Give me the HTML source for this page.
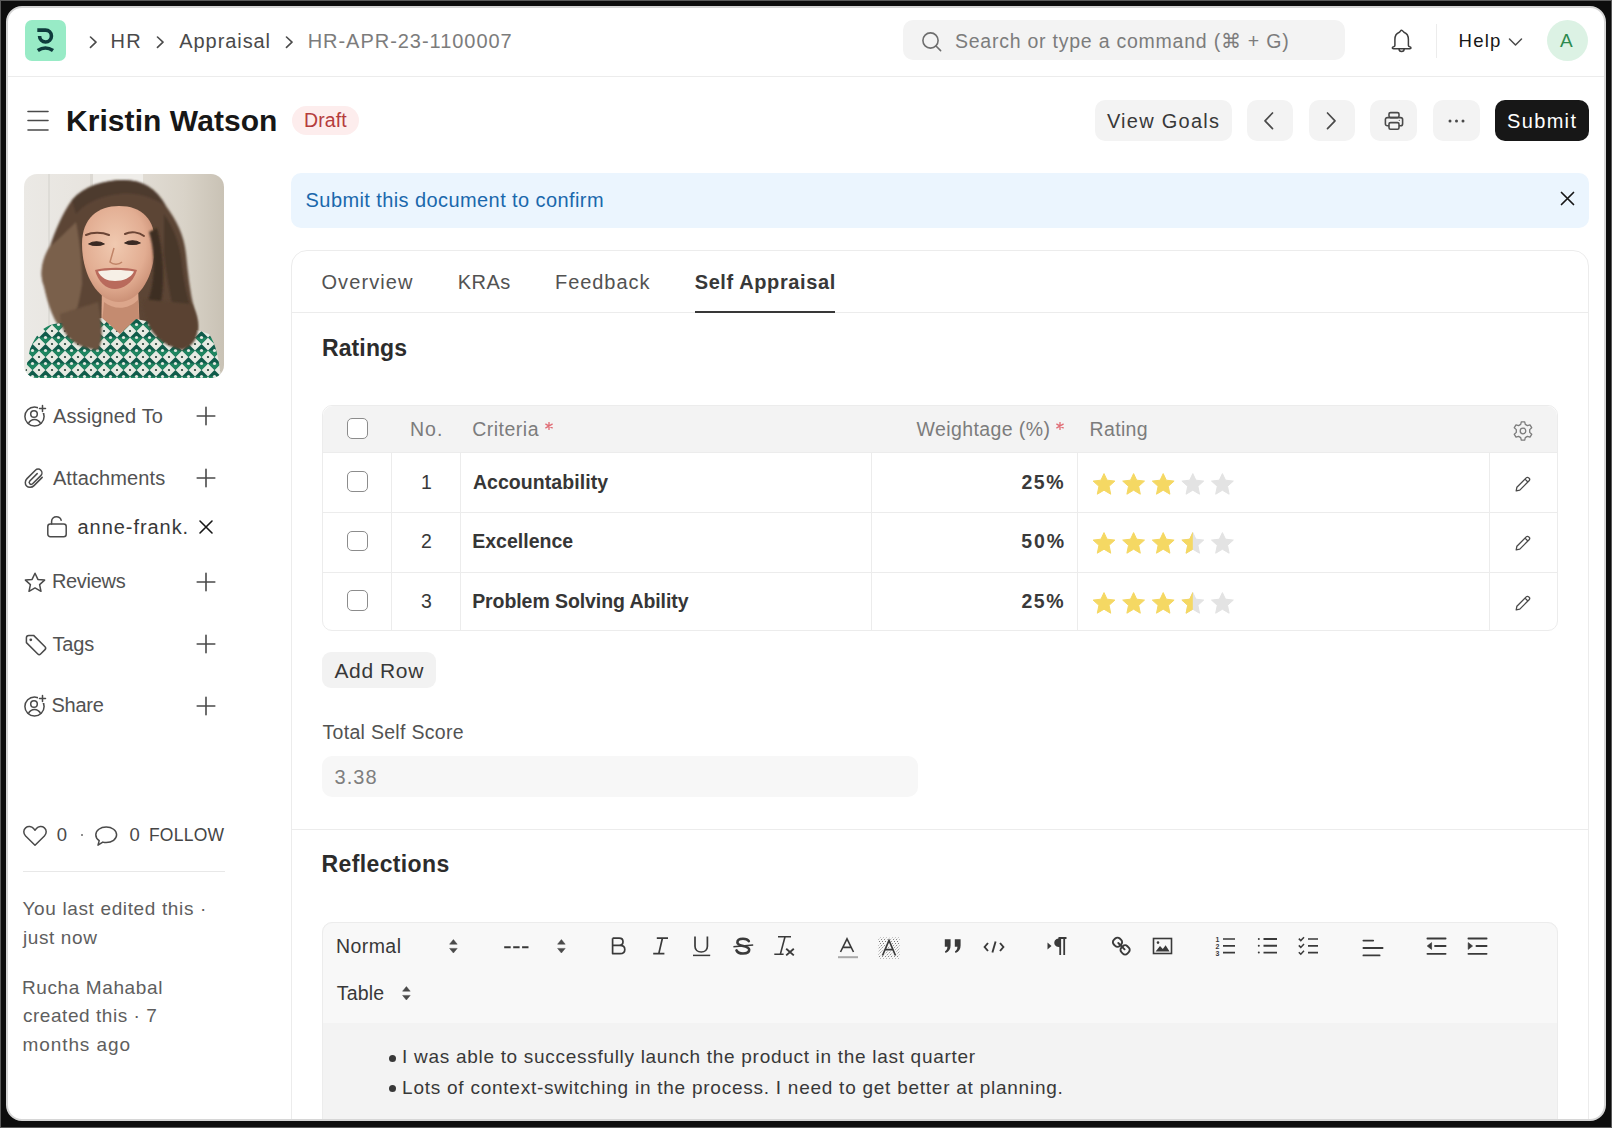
<!DOCTYPE html>
<html><head><meta charset="utf-8"><style>
html,body{margin:0;padding:0;width:1612px;height:1128px;overflow:hidden;background:#5a5a5a;}
.frame{position:absolute;left:1px;top:1px;width:1610px;height:1126px;background:#0d0d0d;border-radius:0px;}
.panel{position:absolute;left:6px;top:6px;width:1600px;height:1115px;background:#ffffff;border-radius:16px;border:2px solid #d6d6d6;box-sizing:border-box;overflow:hidden;}
.t,.r{position:absolute;}
.t{font-family:"Liberation Sans",sans-serif;line-height:1;white-space:nowrap;}
.r{box-sizing:border-box;}
</style></head><body>
<div class="frame"></div>
<div class="panel"><div style="position:absolute;left:-8px;top:-8px;width:1612px;height:1128px;">
<div class="r" style="left:25px;top:20px;width:41px;height:41px;background:#98ebc6;border-radius:7px;"></div>
<svg class="r" style="left:25px;top:20px;" width="41" height="41" viewBox="0 0 41 41" fill="none"><path d="M12.3 10.1 H20.5 A5.95 5.95 0 1 1 14.55 16.1" stroke="#0e3b3c" stroke-width="3.6"/><path d="M12.8 30.6 Q20.4 25.4 28 30.6" stroke="#0e3b3c" stroke-width="3.6"/></svg>
<svg class="r" style="left:88.5px;top:36px;" width="9" height="13" viewBox="0 0 9 13" fill="none"><path d="M1.5 1 L7 6.2 L1.5 11.4" stroke="#4b4b4b" stroke-width="1.6" stroke-linecap="round" stroke-linejoin="round"/></svg>
<svg class="r" style="left:155.5px;top:36px;" width="9" height="13" viewBox="0 0 9 13" fill="none"><path d="M1.5 1 L7 6.2 L1.5 11.4" stroke="#4b4b4b" stroke-width="1.6" stroke-linecap="round" stroke-linejoin="round"/></svg>
<svg class="r" style="left:284.5px;top:36px;" width="9" height="13" viewBox="0 0 9 13" fill="none"><path d="M1.5 1 L7 6.2 L1.5 11.4" stroke="#4b4b4b" stroke-width="1.6" stroke-linecap="round" stroke-linejoin="round"/></svg>
<div class="t" id="k0" style="left:110.50px;top:30.9px;font-size:20px;font-weight:400;color:#4a4a4a;letter-spacing:1.200px;">HR</div>
<div class="t" id="k1" style="left:179.30px;top:30.9px;font-size:20px;font-weight:400;color:#4a4a4a;letter-spacing:0.924px;">Appraisal</div>
<div class="t" id="k2" style="left:307.70px;top:30.9px;font-size:20px;font-weight:400;color:#7c7c7c;letter-spacing:0.962px;">HR-APR-23-1100007</div>
<div class="r" style="left:903px;top:20px;width:442px;height:40px;background:#f3f3f3;border-radius:10px;"></div>
<svg class="r" style="left:921px;top:31px;" width="22" height="22" viewBox="0 0 22 22" fill="none"><circle cx="9.5" cy="9.5" r="7.6" stroke="#6e6e6e" stroke-width="1.6"/><path d="M15 15 L19.6 19.6" stroke="#6e6e6e" stroke-width="1.6" stroke-linecap="round"/></svg>
<div class="t" id="k3" style="left:954.90px;top:32.0px;font-size:19.5px;font-weight:400;color:#7c7c7c;letter-spacing:0.769px;">Search or type a command (⌘ + G)</div>
<svg class="r" style="left:1390px;top:28px;" width="24" height="26" viewBox="0 0 24 26" fill="none"><path d="M11.6 2.2 C10.6 2.2 10.2 3.6 9.4 4.3 C6.5 5.3 4.9 8 4.9 11.5 V17.5 C4.9 18.2 4.4 18.6 3.6 18.8 C2.6 19 2.3 19.6 2.3 20.1 C2.3 20.6 2.8 20.7 3.5 20.7 H19.8 C20.5 20.7 21 20.6 21 20.1 C21 19.6 20.7 19 19.7 18.8 C18.9 18.6 18.4 18.2 18.4 17.5 V11.5 C18.4 8 16.8 5.3 13.9 4.3 C13.1 3.6 12.6 2.2 11.6 2.2 Z" stroke="#3e3e3e" stroke-width="1.5" stroke-linejoin="round"/><path d="M9 20.7 C9 22.4 10.2 23.5 11.6 23.5 C13 23.5 14.2 22.4 14.2 20.7" stroke="#3e3e3e" stroke-width="1.5"/></svg>
<div class="r" style="left:1435.5px;top:23.5px;width:1.2px;height:34px;background:#ececec;border-radius:0px;"></div>
<div class="t" id="k4" style="left:1458.50px;top:31.5px;font-size:18.6px;font-weight:400;color:#171717;letter-spacing:1.233px;">Help</div>
<svg class="r" style="left:1508px;top:37px;" width="15" height="10" viewBox="0 0 15 10" fill="none"><path d="M1.5 2 L7.5 8 L13.5 2" stroke="#4a4a4a" stroke-width="1.5" stroke-linecap="round" stroke-linejoin="round"/></svg>
<div class="r" style="left:1547px;top:20px;width:41px;height:41px;background:#dcf2e4;border-radius:21px;"></div>
<div class="t" id="k5" style="left:1560.00px;top:31.4px;font-size:19px;font-weight:400;color:#2c8a4f;letter-spacing:0.000px;">A</div>
<div class="r" style="left:8px;top:75.5px;width:1597px;height:1px;background:#ececec;border-radius:0px;"></div>
<svg class="r" style="left:26px;top:109px;" width="24" height="24" viewBox="0 0 24 24" fill="none"><path d="M2 2.5 H22 M2 11.5 H22 M2 21 H22" stroke="#4a4a4a" stroke-width="1.6" stroke-linecap="round"/></svg>
<div class="t" id="k6" style="left:65.90px;top:106.3px;font-size:30px;font-weight:700;color:#171717;letter-spacing:0.077px;">Kristin Watson</div>
<div class="r" style="left:292px;top:106px;width:67px;height:29px;background:#fdeded;border-radius:15px;"></div>
<div class="t" id="k7" style="left:304.00px;top:110.6px;font-size:19.5px;font-weight:400;color:#b53c3c;letter-spacing:0.100px;">Draft</div>
<div class="r" style="left:1095px;top:100px;width:137px;height:41px;background:#f3f3f3;border-radius:10px;"></div>
<div class="t" id="k8" style="left:1106.90px;top:111.2px;font-size:20px;font-weight:400;color:#383838;letter-spacing:1.255px;">View Goals</div>
<div class="r" style="left:1247px;top:100px;width:46px;height:41px;background:#f3f3f3;border-radius:10px;"></div>
<svg class="r" style="left:1262px;top:111px;" width="14" height="20" viewBox="0 0 14 20" fill="none"><path d="M10.5 2 L3 9.8 L10.5 17.6" stroke="#4a4a4a" stroke-width="1.7" stroke-linecap="round" stroke-linejoin="round"/></svg>
<div class="r" style="left:1309px;top:100px;width:46px;height:41px;background:#f3f3f3;border-radius:10px;"></div>
<svg class="r" style="left:1324px;top:111px;" width="14" height="20" viewBox="0 0 14 20" fill="none"><path d="M3.5 2 L11 9.8 L3.5 17.6" stroke="#4a4a4a" stroke-width="1.7" stroke-linecap="round" stroke-linejoin="round"/></svg>
<div class="r" style="left:1370px;top:100px;width:47px;height:41px;background:#f3f3f3;border-radius:10px;"></div>
<svg class="r" style="left:1383px;top:110px;" width="22" height="22" viewBox="0 0 22 22" fill="none"><rect x="6" y="2.6" width="10" height="5" rx="1.5" stroke="#4a4a4a" stroke-width="1.6"/><path d="M6 15.8 H4.5 C3.2 15.8 2.4 15 2.4 13.7 V9.6 C2.4 8.3 3.2 7.6 4.5 7.6 H17.5 C18.8 7.6 19.6 8.3 19.6 9.6 V13.7 C19.6 15 18.8 15.8 17.5 15.8 H16" stroke="#4a4a4a" stroke-width="1.6"/><rect x="6" y="12.6" width="10" height="6.6" rx="1.5" stroke="#4a4a4a" stroke-width="1.6"/><circle cx="16.3" cy="10.3" r="0.6" fill="#4a4a4a"/></svg>
<div class="r" style="left:1433px;top:100px;width:47px;height:41px;background:#f3f3f3;border-radius:10px;"></div>
<svg class="r" style="left:1446px;top:116px;" width="22" height="10" viewBox="0 0 22 10" fill="none"><circle cx="4" cy="5" r="1.5" fill="#4a4a4a"/><circle cx="10.5" cy="5" r="1.5" fill="#4a4a4a"/><circle cx="17" cy="5" r="1.5" fill="#4a4a4a"/></svg>
<div class="r" style="left:1494.5px;top:100px;width:94.5px;height:41px;background:#171717;border-radius:10px;"></div>
<div class="t" id="k9" style="left:1507.10px;top:111.4px;font-size:20px;font-weight:400;color:#ffffff;letter-spacing:1.320px;">Submit</div>
<svg class="r" style="left:24px;top:174px;" width="200" height="204" viewBox="0 0 200 204" fill="none">
<defs>
<linearGradient id="bgp" x1="0" y1="0" x2="1" y2="0">
<stop offset="0" stop-color="#ebe9e5"/><stop offset="0.45" stop-color="#e6e2dc"/><stop offset="0.8" stop-color="#d9d3c8"/><stop offset="1" stop-color="#c9c2b5"/></linearGradient>
<radialGradient id="face" cx="0.45" cy="0.4" r="0.65"><stop offset="0" stop-color="#f0c9b0"/><stop offset="0.65" stop-color="#e2ad92"/><stop offset="1" stop-color="#c68a70"/></radialGradient>
<pattern id="shirt" x="2" y="1" width="13" height="13" patternUnits="userSpaceOnUse">
<rect width="13" height="13" fill="#e6eae2"/>
<path d="M6.5 0 L13 6.5 L6.5 13 L0 6.5 Z" fill="#0f5c4a"/>
<path d="M0 6.5 L6.5 13 L13 6.5 Z" fill="#1f8560"/>
<circle cx="6.5" cy="6.5" r="1.6" fill="#e6eae2"/>
<circle cx="0" cy="0" r="1.1" fill="#1c3a30"/><circle cx="13" cy="0" r="1.1" fill="#1c3a30"/><circle cx="0" cy="13" r="1.1" fill="#1c3a30"/><circle cx="13" cy="13" r="1.1" fill="#1c3a30"/>
</pattern>
<clipPath id="pc"><rect width="200" height="204" rx="13"/></clipPath>
<filter id="hb" x="-20%" y="-20%" width="140%" height="140%"><feGaussianBlur stdDeviation="1.0"/></filter>
<filter id="sb" x="-10%" y="-10%" width="120%" height="120%"><feGaussianBlur stdDeviation="0.5"/></filter>
</defs>
<g clip-path="url(#pc)">
<rect width="200" height="204" fill="url(#bgp)"/>
<rect x="24" y="0" width="2" height="160" fill="#dedcd7"/>
<rect x="66" y="0" width="3" height="40" fill="#dcd9d3"/>
<rect x="69" y="0" width="50" height="30" fill="#efede9"/>
<g filter="url(#hb)"><path d="M100 6 C118 6 132 14 142 32 C152 46 160 60 162 80 C164 100 166 118 170 135 C176 150 176 165 160 174 L125 174 L75 174 C60 176 45 172 42 160 C30 150 24 130 20 112 C15 100 18 85 26 72 C32 55 38 40 48 26 C60 12 80 6 100 6 Z" fill="#5c4535"/>
<path d="M20 112 C24 130 30 150 42 160 C50 150 55 130 58 110 C58 90 56 70 52 48 C40 60 30 70 26 72 C18 85 15 100 20 112 Z" fill="#7a604c"/>
<path d="M48 26 C60 12 80 6 100 6 C118 6 132 14 142 32 C128 22 110 18 95 20 C75 22 60 30 52 40 Z" fill="#4d3a2d"/>
<path d="M140 40 C150 55 156 70 158 90 C160 110 164 125 168 138 L150 140 C146 120 142 100 140 80 Z" fill="#4a372b"/>
</g>
<path d="M78 112 L77 162 L116 162 L114 112 Z" fill="#dca68b"/>
<path d="M80 128 C90 136 104 136 114 126 L116 162 L77 162 Z" fill="#c48b70"/>
<path d="M58 70 C58 44 74 32 95 32 C118 32 131 45 131 70 C131 101 116 128 95 128 C74 128 58 101 58 70 Z" fill="url(#face)"/>
<g filter="url(#hb)"><path d="M125 58 C132 80 131 110 123 130 L136 134 C141 110 140 80 133 54 Z" fill="#3d2d23"/>
</g>
<path d="M0 204 L6 175 C12 160 20 152 30 150 C50 147 65 145 78 144 L96 160 L112 145 C135 150 165 152 185 160 C192 170 195 185 197 204 Z" fill="url(#shirt)"/>
<g filter="url(#hb)"><path d="M36 140 C36 158 48 174 74 176 C80 165 78 150 74 128 Z" fill="#6c5240"/>
<path d="M118 125 C120 150 130 170 158 176 C176 170 178 150 168 130 Z" fill="#5a4333"/>
</g>
<path d="M62 61 C68 58 78 58 85 61" stroke="#6b4535" stroke-width="2" stroke-linecap="round" fill="none"/>
<path d="M101 60 C107 57 115 58 120 62" stroke="#6b4535" stroke-width="2" stroke-linecap="round" fill="none"/>
<path d="M65 70 C69 67 76 67 80 70 C76 72 69 72 65 70 Z" fill="#3a2a24" stroke="#3a2a24" stroke-width="1.2"/>
<path d="M101 69 C105 66 112 66 116 69 C112 71 105 71 101 69 Z" fill="#3a2a24" stroke="#3a2a24" stroke-width="1.2"/>
<path d="M90 74 L86 88 C89 91 95 91 98 88" stroke="#c08468" stroke-width="1.5" fill="none"/>
<path d="M71 96 C82 93 102 93 113 96 C109 110 98 115 91 115 C82 115 74 108 71 96 Z" fill="#b96a5c"/>
<path d="M74 97.5 C84 95.5 100 95.5 110 97.5 C107 104 99 107 91 107 C83 107 77 104 74 97.5 Z" fill="#f6f0e6"/>
</g></svg>
<svg class="r" style="left:23px;top:404px;" width="24" height="24" viewBox="0 0 24 24" fill="none"><circle cx="11.5" cy="12.5" r="9.6" stroke="#4a4a4a" stroke-width="1.5"/><circle cx="11" cy="10" r="3.3" stroke="#4a4a4a" stroke-width="1.5"/><path d="M5.2 19.8 C6.8 16.8 9 15.6 11.5 15.6 C14 15.6 16.2 16.8 17.8 19.8" stroke="#4a4a4a" stroke-width="1.5"/><rect x="15" y="0" width="9" height="9" fill="#fff"/><path d="M19.5 1.5 V7.5 M16.5 4.5 H22.5" stroke="#4a4a4a" stroke-width="1.5" stroke-linecap="round"/></svg>
<div class="t" id="k10" style="left:52.90px;top:406.2px;font-size:20px;font-weight:400;color:#525252;letter-spacing:0.150px;">Assigned To</div>
<svg class="r" style="left:196px;top:406px;" width="20" height="20" viewBox="0 0 20 20" fill="none"><path d="M10 1.2 V18.8 M1.2 10 H18.8" stroke="#4a4a4a" stroke-width="1.6" stroke-linecap="round"/></svg>
<svg class="r" style="left:23px;top:467px;" width="24" height="24" viewBox="0 0 24 24" fill="none"><path d="M19.2 10.4 L11 18.6 C8.8 20.8 5.4 20.8 3.6 19 C1.8 17.2 1.8 13.8 4 11.6 L12.4 3.2 C13.9 1.7 16.3 1.7 17.8 3.2 C19.3 4.7 19.3 7.1 17.8 8.6 L9.6 16.8 C8.8 17.6 7.5 17.6 6.8 16.8 C6.1 16.1 6.1 14.8 6.8 14 L14.2 6.6" stroke="#4a4a4a" stroke-width="1.5" stroke-linecap="round"/></svg>
<div class="t" id="k11" style="left:52.90px;top:468.1px;font-size:20px;font-weight:400;color:#525252;letter-spacing:0.110px;">Attachments</div>
<svg class="r" style="left:196px;top:468px;" width="20" height="20" viewBox="0 0 20 20" fill="none"><path d="M10 1.2 V18.8 M1.2 10 H18.8" stroke="#4a4a4a" stroke-width="1.6" stroke-linecap="round"/></svg>
<svg class="r" style="left:46px;top:515px;" width="22" height="24" viewBox="0 0 22 24" fill="none"><rect x="1.8" y="9" width="18.4" height="12.8" rx="2.5" stroke="#4a4a4a" stroke-width="1.5"/><path d="M5.6 9 V6.4 C5.6 3.6 7.8 1.8 10.4 1.8 C12.8 1.8 14.6 3.2 15.2 5.2" stroke="#4a4a4a" stroke-width="1.5" stroke-linecap="round"/></svg>
<div class="t" id="k12" style="left:77.50px;top:516.5px;font-size:20px;font-weight:400;color:#383838;letter-spacing:0.950px;">anne-frank.</div>
<svg class="r" style="left:198px;top:519px;" width="16" height="16" viewBox="0 0 16 16" fill="none"><path d="M2 2 L14 14 M14 2 L2 14" stroke="#171717" stroke-width="1.6" stroke-linecap="round"/></svg>
<svg class="r" style="left:23px;top:571px;" width="24" height="24" viewBox="0 0 24 24" fill="none"><path d="M12 2.2 L14.9 8.4 L21.6 9.1 L16.6 13.6 L18 20.3 L12 16.9 L6 20.3 L7.4 13.6 L2.4 9.1 L9.1 8.4 Z" stroke="#4a4a4a" stroke-width="1.5" stroke-linejoin="round"/></svg>
<div class="t" id="k13" style="left:51.90px;top:570.9px;font-size:20px;font-weight:400;color:#525252;letter-spacing:-0.300px;">Reviews</div>
<svg class="r" style="left:196px;top:572px;" width="20" height="20" viewBox="0 0 20 20" fill="none"><path d="M10 1.2 V18.8 M1.2 10 H18.8" stroke="#4a4a4a" stroke-width="1.6" stroke-linecap="round"/></svg>
<svg class="r" style="left:24px;top:633px;" width="24" height="24" viewBox="0 0 24 24" fill="none"><path d="M2.4 4.8 V9.6 L13.8 21 C14.6 21.8 15.8 21.8 16.6 21 L21 16.6 C21.8 15.8 21.8 14.6 21 13.8 L9.6 2.4 H4.8 C3.5 2.4 2.4 3.5 2.4 4.8 Z" stroke="#4a4a4a" stroke-width="1.5" stroke-linejoin="round"/><circle cx="6.8" cy="6.8" r="1.4" fill="#4a4a4a"/></svg>
<div class="t" id="k14" style="left:52.50px;top:634.1px;font-size:20px;font-weight:400;color:#525252;letter-spacing:-0.134px;">Tags</div>
<svg class="r" style="left:196px;top:634px;" width="20" height="20" viewBox="0 0 20 20" fill="none"><path d="M10 1.2 V18.8 M1.2 10 H18.8" stroke="#4a4a4a" stroke-width="1.6" stroke-linecap="round"/></svg>
<svg class="r" style="left:23px;top:694px;" width="24" height="24" viewBox="0 0 24 24" fill="none"><circle cx="11.5" cy="12.5" r="9.6" stroke="#4a4a4a" stroke-width="1.5"/><circle cx="11" cy="10" r="3.3" stroke="#4a4a4a" stroke-width="1.5"/><path d="M5.2 19.8 C6.8 16.8 9 15.6 11.5 15.6 C14 15.6 16.2 16.8 17.8 19.8" stroke="#4a4a4a" stroke-width="1.5"/><rect x="15" y="0" width="9" height="9" fill="#fff"/><path d="M19.5 1.5 V7.5 M16.5 4.5 H22.5" stroke="#4a4a4a" stroke-width="1.5" stroke-linecap="round"/></svg>
<div class="t" id="k15" style="left:51.50px;top:695.1px;font-size:20px;font-weight:400;color:#525252;letter-spacing:-0.250px;">Share</div>
<svg class="r" style="left:196px;top:696px;" width="20" height="20" viewBox="0 0 20 20" fill="none"><path d="M10 1.2 V18.8 M1.2 10 H18.8" stroke="#4a4a4a" stroke-width="1.6" stroke-linecap="round"/></svg>
<svg class="r" style="left:22px;top:825px;" width="26" height="22" viewBox="0 0 26 22" fill="none"><path d="M13 20.2 L3.6 11 C1.2 8.6 1.2 4.8 3.6 2.8 C6 0.8 9.6 1.2 11.6 3.6 L13 5.2 L14.4 3.6 C16.4 1.2 20 0.8 22.4 2.8 C24.8 4.8 24.8 8.6 22.4 11 Z" stroke="#4a4a4a" stroke-width="1.5" stroke-linejoin="round"/></svg>
<div class="t" id="k16" style="left:56.80px;top:826.1px;font-size:18.5px;font-weight:400;color:#4a4a4a;letter-spacing:0.000px;">0</div>
<div class="r" style="left:80.5px;top:833.5px;width:2.2px;height:2.2px;background:#6a6a6a;border-radius:2px;"></div>
<svg class="r" style="left:94px;top:825px;" width="26" height="22" viewBox="0 0 26 22" fill="none"><path d="M12.2 2 C18 2 22.6 5.4 22.6 9.8 C22.6 14.2 18 17.6 12.2 17.6 C11 17.6 9.8 17.4 8.8 17.1 L4 20.2 L5.2 15.6 C3 14.2 1.8 12.2 1.8 9.8 C1.8 5.4 6.4 2 12.2 2 Z" stroke="#4a4a4a" stroke-width="1.5" stroke-linejoin="round"/></svg>
<div class="t" id="k17" style="left:129.40px;top:826.1px;font-size:18.5px;font-weight:400;color:#4a4a4a;letter-spacing:0.000px;">0</div>
<div class="t" id="k18" style="left:148.90px;top:827.4px;font-size:17.5px;font-weight:400;color:#454545;letter-spacing:0.270px;">FOLLOW</div>
<div class="r" style="left:23px;top:871px;width:202px;height:1px;background:#e8e8e8;border-radius:0px;"></div>
<div class="t" id="k19" style="left:22.50px;top:899.2px;font-size:19px;font-weight:400;color:#5e5e5e;letter-spacing:0.638px;">You last edited this ·</div>
<div class="t" id="k20" style="left:22.90px;top:927.5px;font-size:19px;font-weight:400;color:#5e5e5e;letter-spacing:0.614px;">just now</div>
<div class="t" id="k21" style="left:21.90px;top:978.1px;font-size:19px;font-weight:400;color:#5e5e5e;letter-spacing:0.617px;">Rucha Mahabal</div>
<div class="t" id="k22" style="left:22.90px;top:1006.4px;font-size:19px;font-weight:400;color:#5e5e5e;letter-spacing:0.553px;">created this · 7</div>
<div class="t" id="k23" style="left:22.50px;top:1034.7px;font-size:19px;font-weight:400;color:#5e5e5e;letter-spacing:0.911px;">months ago</div>
<div class="r" style="left:291px;top:173px;width:1298px;height:54.5px;background:#ebf5fe;border-radius:10px;"></div>
<div class="t" id="k24" style="left:305.60px;top:189.7px;font-size:20px;font-weight:400;color:#1a68ac;letter-spacing:0.410px;">Submit this document to confirm</div>
<svg class="r" style="left:1559px;top:190px;" width="17" height="17" viewBox="0 0 17 17" fill="none"><path d="M2.5 2.5 L14.5 14.5 M14.5 2.5 L2.5 14.5" stroke="#171717" stroke-width="1.7" stroke-linecap="round"/></svg>
<div class="r" style="left:291px;top:250px;width:1298px;height:1000px;background:transparent;border-radius:16px;border:1.2px solid #ececec;box-sizing:border-box;"></div>
<div class="t" id="k25" style="left:321.40px;top:272.1px;font-size:20px;font-weight:400;color:#525252;letter-spacing:1.114px;">Overview</div>
<div class="t" id="k26" style="left:457.70px;top:272.1px;font-size:20px;font-weight:400;color:#525252;letter-spacing:0.466px;">KRAs</div>
<div class="t" id="k27" style="left:555.00px;top:272.1px;font-size:20px;font-weight:400;color:#525252;letter-spacing:0.943px;">Feedback</div>
<div class="t" id="k28" style="left:694.70px;top:271.9px;font-size:20px;font-weight:700;color:#383838;letter-spacing:0.611px;">Self Appraisal</div>
<div class="r" style="left:292px;top:311.5px;width:1296px;height:1px;background:#ececec;border-radius:0px;"></div>
<div class="r" style="left:695px;top:310.6px;width:140px;height:2.2px;background:#383838;border-radius:0px;"></div>
<div class="t" id="k29" style="left:321.90px;top:337.2px;font-size:23px;font-weight:700;color:#2c2c2c;letter-spacing:0.134px;">Ratings</div>
<div class="r" style="left:322px;top:405px;width:1236px;height:226px;background:#ffffff;border-radius:10px;border:1.2px solid #ececec;box-sizing:border-box;overflow:hidden;"></div>
<div class="r" style="left:323px;top:406px;width:1234px;height:46.5px;background:#f3f3f3;border-radius:0px;border-radius:10px 10px 0 0;"></div>
<div class="r" style="left:323px;top:452px;width:1234px;height:1px;background:#ececec;border-radius:0px;"></div>
<div class="r" style="left:323px;top:512px;width:1234px;height:1px;background:#ececec;border-radius:0px;"></div>
<div class="r" style="left:323px;top:571.5px;width:1234px;height:1px;background:#ececec;border-radius:0px;"></div>
<div class="r" style="left:391px;top:453px;width:1px;height:177px;background:#ececec;border-radius:0px;"></div>
<div class="r" style="left:460px;top:453px;width:1px;height:177px;background:#ececec;border-radius:0px;"></div>
<div class="r" style="left:871px;top:453px;width:1px;height:177px;background:#ececec;border-radius:0px;"></div>
<div class="r" style="left:1077px;top:453px;width:1px;height:177px;background:#ececec;border-radius:0px;"></div>
<div class="r" style="left:1488.5px;top:453px;width:1px;height:177px;background:#ececec;border-radius:0px;"></div>
<div class="r" style="left:347px;top:418.3px;width:20.5px;height:20.5px;background:#ffffff;border-radius:5px;border:1.3px solid #8c8c8c;"></div>
<div class="t" id="k30" style="left:409.90px;top:420.3px;font-size:19.5px;font-weight:400;color:#7c7c7c;letter-spacing:1.100px;">No.</div>
<div class="t" id="k31" style="left:472.20px;top:420.3px;font-size:19.5px;font-weight:400;color:#7c7c7c;letter-spacing:0.500px;">Criteria</div>
<svg class="r" style="left:545.4px;top:421.8px;" width="8" height="8" viewBox="0 0 8 8" fill="none"><path d="M4 0.3 V7.7 M0.8 2.15 L7.2 5.85 M0.8 5.85 L7.2 2.15" stroke="#e06c75" stroke-width="1.3" stroke-linecap="round"/></svg>
<div class="t" id="k32" style="left:916.50px;top:420.3px;font-size:19.5px;font-weight:400;color:#7c7c7c;letter-spacing:0.400px;">Weightage (%)</div>
<svg class="r" style="left:1056px;top:421.8px;" width="8" height="8" viewBox="0 0 8 8" fill="none"><path d="M4 0.3 V7.7 M0.8 2.15 L7.2 5.85 M0.8 5.85 L7.2 2.15" stroke="#e06c75" stroke-width="1.3" stroke-linecap="round"/></svg>
<div class="t" id="k33" style="left:1089.60px;top:420.3px;font-size:19.5px;font-weight:400;color:#7c7c7c;letter-spacing:0.320px;">Rating</div>
<svg class="r" style="left:1512px;top:420px;" width="22" height="22" viewBox="0 0 22 22" fill="none"><path d="M9.3 1.8 H12.7 L13.3 4.4 L15.4 5.6 L18 4.8 L19.7 7.7 L17.7 9.6 V12.4 L19.7 14.3 L18 17.2 L15.4 16.4 L13.3 17.6 L12.7 20.2 H9.3 L8.7 17.6 L6.6 16.4 L4 17.2 L2.3 14.3 L4.3 12.4 V9.6 L2.3 7.7 L4 4.8 L6.6 5.6 L8.7 4.4 Z" stroke="#7c7c7c" stroke-width="1.3" stroke-linejoin="round"/><circle cx="11" cy="11" r="2.8" stroke="#7c7c7c" stroke-width="1.3"/></svg>
<div class="r" style="left:347px;top:471.4px;width:20.5px;height:20.5px;background:#ffffff;border-radius:5px;border:1.3px solid #8c8c8c;"></div>
<div class="t" id="k34" style="left:421.00px;top:472.8px;font-size:19.5px;font-weight:400;color:#383838;letter-spacing:0.000px;">1</div>
<div class="t" id="k35" style="left:472.90px;top:472.8px;font-size:19.5px;font-weight:700;color:#363636;letter-spacing:0.069px;">Accountability</div>
<div class="t" id="k36" style="left:1021.50px;top:472.8px;font-size:19.5px;font-weight:700;color:#3a3a3a;letter-spacing:1.500px;">25%</div>
<svg class="r" style="left:1092px;top:472.9px;" width="150" height="23" viewBox="0 0 150 23" fill="none"><defs><clipPath id="hc472"><rect x="0" y="0" width="12" height="24"/></clipPath></defs><path transform="translate(0.0,0)" d="M12 0.6 L15.1 7.2 L22.9 8.1 L17.1 13.3 L18.7 21.2 L12 17.2 L5.3 21.2 L6.9 13.3 L1.1 8.1 L8.9 7.2 Z" fill="#f5d863" stroke="#f5d863" stroke-width="1" stroke-linejoin="round"/><path transform="translate(29.6,0)" d="M12 0.6 L15.1 7.2 L22.9 8.1 L17.1 13.3 L18.7 21.2 L12 17.2 L5.3 21.2 L6.9 13.3 L1.1 8.1 L8.9 7.2 Z" fill="#f5d863" stroke="#f5d863" stroke-width="1" stroke-linejoin="round"/><path transform="translate(59.2,0)" d="M12 0.6 L15.1 7.2 L22.9 8.1 L17.1 13.3 L18.7 21.2 L12 17.2 L5.3 21.2 L6.9 13.3 L1.1 8.1 L8.9 7.2 Z" fill="#f5d863" stroke="#f5d863" stroke-width="1" stroke-linejoin="round"/><path transform="translate(88.80000000000001,0)" d="M12 0.6 L15.1 7.2 L22.9 8.1 L17.1 13.3 L18.7 21.2 L12 17.2 L5.3 21.2 L6.9 13.3 L1.1 8.1 L8.9 7.2 Z" fill="#e3e3e3" stroke="#e3e3e3" stroke-width="1" stroke-linejoin="round"/><path transform="translate(118.4,0)" d="M12 0.6 L15.1 7.2 L22.9 8.1 L17.1 13.3 L18.7 21.2 L12 17.2 L5.3 21.2 L6.9 13.3 L1.1 8.1 L8.9 7.2 Z" fill="#e3e3e3" stroke="#e3e3e3" stroke-width="1" stroke-linejoin="round"/></svg>
<svg class="r" style="left:1515px;top:475.5px;" width="16" height="16" viewBox="0 0 16 16" fill="none"><path d="M1.2 14.8 L1.9 11.2 L11.2 1.9 C11.9 1.2 13 1.2 13.7 1.9 L14.1 2.3 C14.8 3 14.8 4.1 14.1 4.8 L4.8 14.1 Z M10 3.1 L12.9 6" stroke="#4a4a4a" stroke-width="1.3" stroke-linejoin="round"/></svg>
<div class="r" style="left:347px;top:530.9px;width:20.5px;height:20.5px;background:#ffffff;border-radius:5px;border:1.3px solid #8c8c8c;"></div>
<div class="t" id="k37" style="left:421.00px;top:532.3px;font-size:19.5px;font-weight:400;color:#383838;letter-spacing:0.000px;">2</div>
<div class="t" id="k38" style="left:472.20px;top:532.3px;font-size:19.5px;font-weight:700;color:#363636;letter-spacing:0.011px;">Excellence</div>
<div class="t" id="k39" style="left:1021.30px;top:532.3px;font-size:19.5px;font-weight:700;color:#3a3a3a;letter-spacing:1.850px;">50%</div>
<svg class="r" style="left:1092px;top:532.4px;" width="150" height="23" viewBox="0 0 150 23" fill="none"><defs><clipPath id="hc532"><rect x="0" y="0" width="12" height="24"/></clipPath></defs><path transform="translate(0.0,0)" d="M12 0.6 L15.1 7.2 L22.9 8.1 L17.1 13.3 L18.7 21.2 L12 17.2 L5.3 21.2 L6.9 13.3 L1.1 8.1 L8.9 7.2 Z" fill="#f5d863" stroke="#f5d863" stroke-width="1" stroke-linejoin="round"/><path transform="translate(29.6,0)" d="M12 0.6 L15.1 7.2 L22.9 8.1 L17.1 13.3 L18.7 21.2 L12 17.2 L5.3 21.2 L6.9 13.3 L1.1 8.1 L8.9 7.2 Z" fill="#f5d863" stroke="#f5d863" stroke-width="1" stroke-linejoin="round"/><path transform="translate(59.2,0)" d="M12 0.6 L15.1 7.2 L22.9 8.1 L17.1 13.3 L18.7 21.2 L12 17.2 L5.3 21.2 L6.9 13.3 L1.1 8.1 L8.9 7.2 Z" fill="#f5d863" stroke="#f5d863" stroke-width="1" stroke-linejoin="round"/><path transform="translate(88.80000000000001,0)" d="M12 0.6 L15.1 7.2 L22.9 8.1 L17.1 13.3 L18.7 21.2 L12 17.2 L5.3 21.2 L6.9 13.3 L1.1 8.1 L8.9 7.2 Z" fill="#e3e3e3" stroke="#e3e3e3" stroke-width="1" stroke-linejoin="round"/><g clip-path="url(#hc532)" transform="translate(88.80000000000001,0)"><path transform="translate(0,0)" d="M12 0.6 L15.1 7.2 L22.9 8.1 L17.1 13.3 L18.7 21.2 L12 17.2 L5.3 21.2 L6.9 13.3 L1.1 8.1 L8.9 7.2 Z" fill="#f5d863" stroke="#f5d863" stroke-width="1" stroke-linejoin="round"/></g><path transform="translate(118.4,0)" d="M12 0.6 L15.1 7.2 L22.9 8.1 L17.1 13.3 L18.7 21.2 L12 17.2 L5.3 21.2 L6.9 13.3 L1.1 8.1 L8.9 7.2 Z" fill="#e3e3e3" stroke="#e3e3e3" stroke-width="1" stroke-linejoin="round"/></svg>
<svg class="r" style="left:1515px;top:535px;" width="16" height="16" viewBox="0 0 16 16" fill="none"><path d="M1.2 14.8 L1.9 11.2 L11.2 1.9 C11.9 1.2 13 1.2 13.7 1.9 L14.1 2.3 C14.8 3 14.8 4.1 14.1 4.8 L4.8 14.1 Z M10 3.1 L12.9 6" stroke="#4a4a4a" stroke-width="1.3" stroke-linejoin="round"/></svg>
<div class="r" style="left:347px;top:590.4px;width:20.5px;height:20.5px;background:#ffffff;border-radius:5px;border:1.3px solid #8c8c8c;"></div>
<div class="t" id="k40" style="left:421.00px;top:591.8px;font-size:19.5px;font-weight:400;color:#383838;letter-spacing:0.000px;">3</div>
<div class="t" id="k41" style="left:472.20px;top:591.8px;font-size:19.5px;font-weight:700;color:#363636;letter-spacing:-0.081px;">Problem Solving Ability</div>
<div class="t" id="k42" style="left:1021.50px;top:591.8px;font-size:19.5px;font-weight:700;color:#3a3a3a;letter-spacing:1.500px;">25%</div>
<svg class="r" style="left:1092px;top:591.9px;" width="150" height="23" viewBox="0 0 150 23" fill="none"><defs><clipPath id="hc591"><rect x="0" y="0" width="12" height="24"/></clipPath></defs><path transform="translate(0.0,0)" d="M12 0.6 L15.1 7.2 L22.9 8.1 L17.1 13.3 L18.7 21.2 L12 17.2 L5.3 21.2 L6.9 13.3 L1.1 8.1 L8.9 7.2 Z" fill="#f5d863" stroke="#f5d863" stroke-width="1" stroke-linejoin="round"/><path transform="translate(29.6,0)" d="M12 0.6 L15.1 7.2 L22.9 8.1 L17.1 13.3 L18.7 21.2 L12 17.2 L5.3 21.2 L6.9 13.3 L1.1 8.1 L8.9 7.2 Z" fill="#f5d863" stroke="#f5d863" stroke-width="1" stroke-linejoin="round"/><path transform="translate(59.2,0)" d="M12 0.6 L15.1 7.2 L22.9 8.1 L17.1 13.3 L18.7 21.2 L12 17.2 L5.3 21.2 L6.9 13.3 L1.1 8.1 L8.9 7.2 Z" fill="#f5d863" stroke="#f5d863" stroke-width="1" stroke-linejoin="round"/><path transform="translate(88.80000000000001,0)" d="M12 0.6 L15.1 7.2 L22.9 8.1 L17.1 13.3 L18.7 21.2 L12 17.2 L5.3 21.2 L6.9 13.3 L1.1 8.1 L8.9 7.2 Z" fill="#e3e3e3" stroke="#e3e3e3" stroke-width="1" stroke-linejoin="round"/><g clip-path="url(#hc591)" transform="translate(88.80000000000001,0)"><path transform="translate(0,0)" d="M12 0.6 L15.1 7.2 L22.9 8.1 L17.1 13.3 L18.7 21.2 L12 17.2 L5.3 21.2 L6.9 13.3 L1.1 8.1 L8.9 7.2 Z" fill="#f5d863" stroke="#f5d863" stroke-width="1" stroke-linejoin="round"/></g><path transform="translate(118.4,0)" d="M12 0.6 L15.1 7.2 L22.9 8.1 L17.1 13.3 L18.7 21.2 L12 17.2 L5.3 21.2 L6.9 13.3 L1.1 8.1 L8.9 7.2 Z" fill="#e3e3e3" stroke="#e3e3e3" stroke-width="1" stroke-linejoin="round"/></svg>
<svg class="r" style="left:1515px;top:594.5px;" width="16" height="16" viewBox="0 0 16 16" fill="none"><path d="M1.2 14.8 L1.9 11.2 L11.2 1.9 C11.9 1.2 13 1.2 13.7 1.9 L14.1 2.3 C14.8 3 14.8 4.1 14.1 4.8 L4.8 14.1 Z M10 3.1 L12.9 6" stroke="#4a4a4a" stroke-width="1.3" stroke-linejoin="round"/></svg>
<div class="r" style="left:322px;top:652px;width:114px;height:36px;background:#f2f2f2;border-radius:9px;"></div>
<div class="t" id="k43" style="left:334.50px;top:660.0px;font-size:21px;font-weight:400;color:#383838;letter-spacing:0.600px;">Add Row</div>
<div class="t" id="k44" style="left:322.50px;top:722.9px;font-size:19.5px;font-weight:400;color:#525252;letter-spacing:0.300px;">Total Self Score</div>
<div class="r" style="left:322px;top:755.8px;width:596px;height:41.5px;background:#f7f7f7;border-radius:10px;"></div>
<div class="t" id="k45" style="left:334.50px;top:766.7px;font-size:20px;font-weight:400;color:#7e7e7e;letter-spacing:1.067px;">3.38</div>
<div class="r" style="left:292px;top:829px;width:1296px;height:1px;background:#ececec;border-radius:0px;"></div>
<div class="t" id="k46" style="left:321.50px;top:852.7px;font-size:23px;font-weight:700;color:#2c2c2c;letter-spacing:0.380px;">Reflections</div>
<div class="r" style="left:322px;top:922px;width:1236px;height:260px;background:#f3f3f3;border-radius:10px;border:1.2px solid #ececec;box-sizing:border-box;overflow:hidden;"></div>
<div class="r" style="left:323px;top:923px;width:1234px;height:99.5px;background:#f8f8f8;border-radius:0px;border-radius:10px 10px 0 0;"></div>
<div class="t" id="k47" style="left:335.90px;top:937.0px;font-size:19.5px;font-weight:400;color:#383838;letter-spacing:0.450px;">Normal</div>
<svg class="r" style="left:503px;top:944px;" width="27" height="5" viewBox="0 0 27 5" fill="none"><path d="M1.2 3.2 H7.7 M10.2 3.2 H16.6 M19.1 3.2 H25.5" stroke="#383838" stroke-width="2"/></svg>
<div class="t" id="k48" style="left:336.80px;top:983.8px;font-size:19.5px;font-weight:400;color:#383838;letter-spacing:0.200px;">Table</div>
<svg class="r" style="left:449px;top:939px;" width="9" height="15" viewBox="0 0 9 15" fill="none"><path d="M0.6 5.2 L4.4 0.6 L8.2 5.2 Z M0.6 9.4 L4.4 14 L8.2 9.4 Z" fill="#4a4a4a" stroke="#4a4a4a" stroke-width="0.5" stroke-linejoin="round"/></svg>
<svg class="r" style="left:557.3px;top:939px;" width="9" height="15" viewBox="0 0 9 15" fill="none"><path d="M0.6 5.2 L4.4 0.6 L8.2 5.2 Z M0.6 9.4 L4.4 14 L8.2 9.4 Z" fill="#4a4a4a" stroke="#4a4a4a" stroke-width="0.5" stroke-linejoin="round"/></svg>
<svg class="r" style="left:402px;top:986px;" width="9" height="15" viewBox="0 0 9 15" fill="none"><path d="M0.6 5.2 L4.4 0.6 L8.2 5.2 Z M0.6 9.4 L4.4 14 L8.2 9.4 Z" fill="#4a4a4a" stroke="#4a4a4a" stroke-width="0.5" stroke-linejoin="round"/></svg>
<svg class="r" style="left:610px;top:936px;" width="18" height="20" viewBox="0 0 18 20" fill="none"><path d="M2.6 2.2 V17.6 H10 C12.9 17.6 14.8 16 14.8 13.4 C14.8 10.9 12.9 9.4 10 9.4 H2.6 M2.6 9.4 H9.2 C11.6 9.4 13 8 13 5.8 C13 3.6 11.6 2.2 9.2 2.2 H2.6" stroke="#3a3a3a" stroke-width="1.7" stroke-linejoin="round"/></svg>
<svg class="r" style="left:651px;top:936px;" width="18" height="20" viewBox="0 0 18 20" fill="none"><path d="M5.8 2.2 H17 M2.2 17.6 H13.4 M11.4 2.2 L7.8 17.6" stroke="#3a3a3a" stroke-width="1.7"/></svg>
<svg class="r" style="left:691px;top:935px;" width="21" height="23" viewBox="0 0 21 23" fill="none"><path d="M4 1.5 V11.2 C4 14.8 6.6 17 10.2 17 C13.8 17 16.4 14.8 16.4 11.2 V1.5" stroke="#3a3a3a" stroke-width="1.7"/><path d="M2 20.4 H19.2" stroke="#3a3a3a" stroke-width="1.5"/></svg>
<svg class="r" style="left:731px;top:935px;" width="24" height="22" viewBox="0 0 24 22" fill="none"><path d="M17.8 6.2 C16.8 4.4 14.6 3.7 12 3.7 C8.6 3.7 6.4 5.2 6.4 7.4 C6.4 12 18.2 10 18.2 14.8 C18.2 17.2 15.8 18.5 12 18.5 C8.8 18.5 6.4 17.4 5.5 15.4" stroke="#3a3a3a" stroke-width="2.6" stroke-linecap="round"/><path d="M2.4 11.7 L22.2 10.1" stroke="#3a3a3a" stroke-width="1.5"/></svg>
<svg class="r" style="left:772px;top:935px;" width="24" height="22" viewBox="0 0 24 22" fill="none"><path d="M6 1.8 H19 M12.9 2.2 L8.5 18.6 M2.3 19.2 H11.6" stroke="#3a3a3a" stroke-width="1.6"/><path d="M14.2 13.8 L21.8 20.4 M21.8 13.8 L14.2 20.4" stroke="#3a3a3a" stroke-width="1.9"/></svg>
<svg class="r" style="left:837px;top:937px;" width="22" height="22" viewBox="0 0 22 22" fill="none"><path d="M3.5 15 L10 1.8 L16.5 15 M6 10.4 H14" stroke="#3a3a3a" stroke-width="1.6"/><path d="M1 20.2 H21" stroke="#a9a9a9" stroke-width="2"/></svg>
<svg class="r" style="left:878px;top:937px;" width="22" height="22" viewBox="0 0 22 22" fill="none"><defs><clipPath id="hcA"><rect x="0.5" y="0.5" width="21" height="21"/></clipPath></defs><g clip-path="url(#hcA)" opacity="0.75"><path d="M-22 22 L0 0" stroke="#4a4a4a" stroke-width="1" stroke-dasharray="1.5 1.5"/><path d="M-19 22 L3 0" stroke="#4a4a4a" stroke-width="1" stroke-dasharray="1.5 1.5"/><path d="M-16 22 L6 0" stroke="#4a4a4a" stroke-width="1" stroke-dasharray="1.5 1.5"/><path d="M-13 22 L9 0" stroke="#4a4a4a" stroke-width="1" stroke-dasharray="1.5 1.5"/><path d="M-10 22 L12 0" stroke="#4a4a4a" stroke-width="1" stroke-dasharray="1.5 1.5"/><path d="M-7 22 L15 0" stroke="#4a4a4a" stroke-width="1" stroke-dasharray="1.5 1.5"/><path d="M-4 22 L18 0" stroke="#4a4a4a" stroke-width="1" stroke-dasharray="1.5 1.5"/><path d="M-1 22 L21 0" stroke="#4a4a4a" stroke-width="1" stroke-dasharray="1.5 1.5"/><path d="M2 22 L24 0" stroke="#4a4a4a" stroke-width="1" stroke-dasharray="1.5 1.5"/><path d="M5 22 L27 0" stroke="#4a4a4a" stroke-width="1" stroke-dasharray="1.5 1.5"/><path d="M8 22 L30 0" stroke="#4a4a4a" stroke-width="1" stroke-dasharray="1.5 1.5"/><path d="M11 22 L33 0" stroke="#4a4a4a" stroke-width="1" stroke-dasharray="1.5 1.5"/><path d="M14 22 L36 0" stroke="#4a4a4a" stroke-width="1" stroke-dasharray="1.5 1.5"/><path d="M17 22 L39 0" stroke="#4a4a4a" stroke-width="1" stroke-dasharray="1.5 1.5"/><path d="M20 22 L42 0" stroke="#4a4a4a" stroke-width="1" stroke-dasharray="1.5 1.5"/><path d="M23 22 L45 0" stroke="#4a4a4a" stroke-width="1" stroke-dasharray="1.5 1.5"/></g><path d="M4.5 18.5 L11 3.5 L17.5 18.5 M7 12.6 H15" stroke="#f8f8f8" stroke-width="3.4"/><path d="M4.5 18.5 L11 3.5 L17.5 18.5 M7 12.6 H15" stroke="#3a3a3a" stroke-width="1.7"/></svg>
<svg class="r" style="left:943px;top:938px;" width="20" height="16" viewBox="0 0 20 16" fill="none"><path d="M1.8 1.2 H7.6 V7.6 C7.6 11.2 6 13.6 2.6 15 L1.9 13.4 C3.6 12.4 4.4 11 4.4 8.8 H1.8 Z M11.8 1.2 H17.6 V7.6 C17.6 11.2 16 13.6 12.6 15 L11.9 13.4 C13.6 12.4 14.4 11 14.4 8.8 H11.8 Z" fill="#3a3a3a"/></svg>
<svg class="r" style="left:983px;top:941px;" width="22" height="12" viewBox="0 0 22 12" fill="none"><path d="M5 2 L1.6 6 L5 10 M17 2 L20.4 6 L17 10 M12.6 0.6 L9.4 11.4" stroke="#3a3a3a" stroke-width="1.9"/></svg>
<svg class="r" style="left:1046px;top:937px;" width="22" height="19" viewBox="0 0 22 19" fill="none"><path d="M1.5 5.5 L5.5 9 L1.5 12.5 Z" fill="#3a3a3a"/><path d="M12.5 1 H20.5 M14.2 1 V18 M18.2 1 V18" stroke="#3a3a3a" stroke-width="1.8"/><path d="M14.2 1.2 C10 1.2 8.3 3.4 8.3 5.8 C8.3 8.2 10 10.2 14.2 10.2 Z" fill="#3a3a3a"/></svg>
<svg class="r" style="left:1110px;top:936px;" width="23" height="21" viewBox="0 0 23 21" fill="none"><rect x="3.3" y="2" width="8.4" height="8.4" rx="3.2" transform="rotate(45 7.5 6.2)" stroke="#3a3a3a" stroke-width="1.9"/><rect x="10.9" y="9.7" width="8.4" height="8.4" rx="3.2" transform="rotate(45 15.1 13.9)" stroke="#3a3a3a" stroke-width="1.9"/><path d="M8.3 7 L14.6 13.3" stroke="#3a3a3a" stroke-width="1.9" stroke-linecap="round"/></svg>
<svg class="r" style="left:1152px;top:937px;" width="22" height="19" viewBox="0 0 22 19" fill="none"><rect x="1.5" y="1.5" width="18" height="15" stroke="#3a3a3a" stroke-width="1.6"/><path d="M3.6 14.5 L8 9 L10.8 12 L13.6 8.2 L17.6 14.5 Z" fill="#3a3a3a"/><circle cx="6" cy="5.6" r="1.3" fill="#3a3a3a"/></svg>
<svg class="r" style="left:1215px;top:936px;" width="22" height="21" viewBox="0 0 22 21" fill="none"><path d="M8 3 H20 M8 9.8 H20 M8 16.6 H20" stroke="#3a3a3a" stroke-width="1.7"/><text x="0.5" y="6" font-family="Liberation Sans" font-weight="700" font-size="7" fill="#3a3a3a">1</text><text x="0.5" y="12.8" font-family="Liberation Sans" font-weight="700" font-size="7" fill="#3a3a3a">2</text><text x="0.5" y="19.6" font-family="Liberation Sans" font-weight="700" font-size="7" fill="#3a3a3a">3</text></svg>
<svg class="r" style="left:1257px;top:936px;" width="22" height="21" viewBox="0 0 22 21" fill="none"><path d="M6.5 3 H20 M6.5 9.8 H20 M6.5 16.6 H20" stroke="#3a3a3a" stroke-width="1.9"/><circle cx="1.8" cy="3" r="1" fill="#3a3a3a"/><circle cx="1.8" cy="9.8" r="1" fill="#3a3a3a"/><circle cx="1.8" cy="16.6" r="1" fill="#3a3a3a"/></svg>
<svg class="r" style="left:1298px;top:936px;" width="22" height="21" viewBox="0 0 22 21" fill="none"><path d="M10 3 H20 M10 9.8 H20 M10 16.6 H20" stroke="#3a3a3a" stroke-width="1.7"/><path d="M0.8 2.6 L2.8 4.6 L6 1.2 M0.8 9.4 L2.8 11.4 L6 8 M0.8 16.2 L2.8 18.2 L6 14.8" stroke="#3a3a3a" stroke-width="1.5"/></svg>
<svg class="r" style="left:1362px;top:937px;" width="22" height="21" viewBox="0 0 22 21" fill="none"><path d="M1.4 3.6 H11.2 M1.4 11 H20.6 M1.4 18.4 H17.6" stroke="#3a3a3a" stroke-width="1.8" stroke-linecap="round"/></svg>
<svg class="r" style="left:1426px;top:937px;" width="22" height="19" viewBox="0 0 22 19" fill="none"><path d="M1.4 1.5 H19.6 M9 9 H19.6 M1.4 16.8 H19.6" stroke="#3a3a3a" stroke-width="1.8" stroke-linecap="round"/><path d="M5.6 5.6 L1.2 9 L5.6 12.4 Z" fill="#3a3a3a" stroke="#3a3a3a" stroke-width="0.6" stroke-linejoin="round"/></svg>
<svg class="r" style="left:1467px;top:937px;" width="22" height="19" viewBox="0 0 22 19" fill="none"><path d="M1.4 1.5 H19.6 M9.4 9 H19.6 M1.4 16.8 H19.6" stroke="#3a3a3a" stroke-width="1.8" stroke-linecap="round"/><path d="M1.2 5.6 L5.6 9 L1.2 12.4 Z" fill="#3a3a3a" stroke="#3a3a3a" stroke-width="0.6" stroke-linejoin="round"/></svg>
<div class="r" style="left:388.5px;top:1054.5px;width:7px;height:7px;background:#383838;border-radius:4px;"></div>
<div class="t" id="k49" style="left:402.10px;top:1047.1px;font-size:19px;font-weight:400;color:#383838;letter-spacing:0.701px;">I was able to successfully launch the product in the last quarter</div>
<div class="r" style="left:388.5px;top:1085.3px;width:7px;height:7px;background:#383838;border-radius:4px;"></div>
<div class="t" id="k50" style="left:402.10px;top:1077.9px;font-size:19px;font-weight:400;color:#383838;letter-spacing:0.750px;">Lots of context-switching in the process. I need to get better at planning.</div>

</div></div>
</body></html>
